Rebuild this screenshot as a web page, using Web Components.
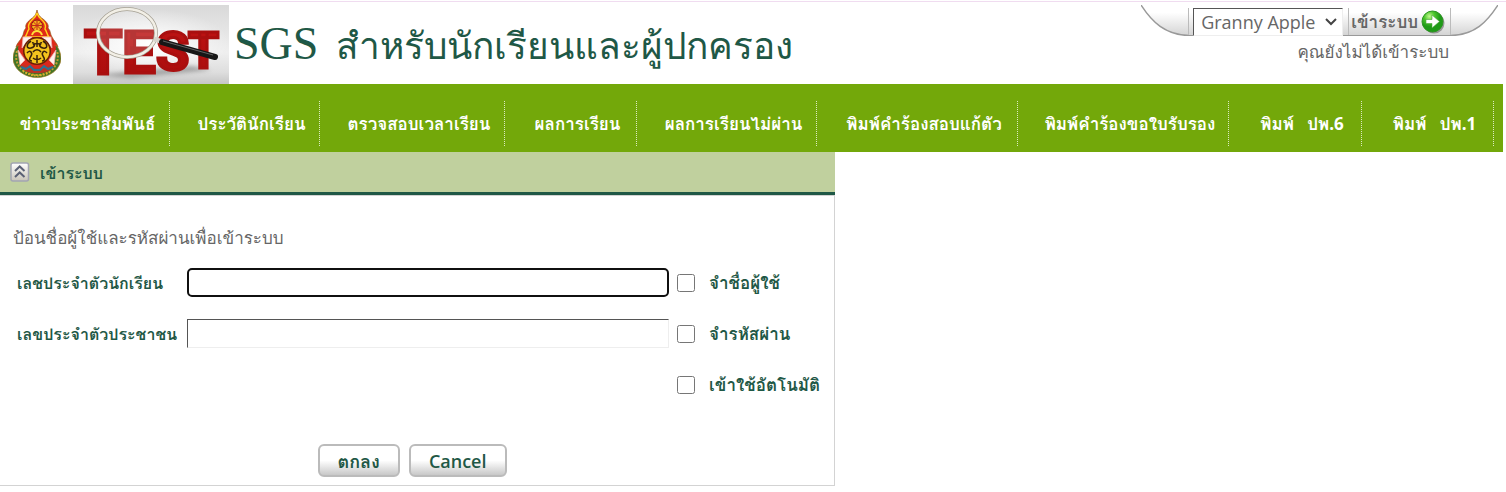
<!DOCTYPE html>
<html lang="th">
<head>
<meta charset="utf-8">
<meta name="viewport" content="width=device-width, initial-scale=1">
<title>SGS สำหรับนักเรียนและผู้ปกครอง</title>
<style>
	body{
		margin: 0;
		background: #fff;
		color: #666;
		font: 18px/24px "Open Sans", "Noto Sans", Loma, sans-serif;
	}
</style>
</head>
<body>

<sgs-page>
	<sgs-header slot="header">
		SGS
		<span slot="sub">สำหรับนักเรียนและผู้ปกครอง</span>
		<sgs-tools slot="tools" status="คุณยังไม่ได้เข้าระบบ"></sgs-tools>
	</sgs-header>
	<sgs-menu slot="menu"></sgs-menu>
	<sgs-panel heading="เข้าระบบ">
		<sgs-login></sgs-login>
	</sgs-panel>
</sgs-page>

<script>
class SgsPage extends HTMLElement {
	constructor(){
		super();
		this.attachShadow({mode:'open'});
	}
	connectedCallback(){
		this.shadowRoot.innerHTML = `
			<style>
				:host{
					display: block;
					padding-right: 3px;
				}
				header{
					position: relative;
				}
				header::before{
					content: "";
					position: absolute;
					top: 1px;
					left: 0;
					right: -3px;
					height: 1px;
					background: #f0dcf0;
				}
				main{
					display: grid;
					grid-template-columns: 5fr 4fr;
				}
			</style>
			<header><slot name="header"></slot></header>
			<slot name="menu"></slot>
			<main><slot></slot></main>
		`;
	}
}
customElements.define('sgs-page', SgsPage);


class SgsEmblem extends HTMLElement {
	constructor(){
		super();
		this.attachShadow({mode:'open'});
	}
	connectedCallback(){
		this.shadowRoot.innerHTML = `
			<style>
				:host{ display: block; }
				svg{ display: block; }
			</style>
			<svg width="48" height="68" viewBox="0 0 48 68" aria-hidden="true">
				<path d="M24 0c1 5 3 7 6 9 4 3 6 6 5 9 3 3 2 6 4 9 2 4 5 6 6 10H3c1-4 4-6 6-10 2-3 1-6 4-9-1-3 1-6 5-9 3-2 5-4 6-9z" fill="#e02a18" stroke="#8d5a18" stroke-width=".7"/>
				<path d="M24 3c1 4 4 6 6 8 3 3 3 5 2 8 2 3 2 6 4 8H12c2-2 2-5 4-8-1-3-1-5 2-8 2-2 5-4 6-8z" fill="none" stroke="#ffd21c" stroke-width="1.4"/>
				<path d="M4 36c-3 5-4 9-4 13 1 11 12 18.500 24 18.500S47 60 48 49c0-4-1-8-4-13z" fill="#3c7427" stroke="#a67b28" stroke-width=".7"/>
				<path d="M4 41c-4 14 7 24 20 24s24-10 20-24" fill="none" stroke="#c6a032" stroke-width="2" stroke-dasharray="2 1.500"/>
				<path d="M5 37c3-2 4-5 5-10h28c1 5 2 8 5 10-1 7 0 13-3 20-5 6-27 6-32 0-3-7-2-13-3-20z" fill="#d8281c"/>
				<path d="M10 27h9L9 38zM38 27h-9l10 11zM5 40l7 10-5 5zM43 40l-7 10 5 5z" fill="#fff2ee" stroke="#efb2ae" stroke-width=".8"/>
				<circle cx="24" cy="15.500" r="5.500" fill="#f5b21c" stroke="#8e1e10"/>
				<path d="M24 10v11M18.500 15.500h11M20 11.500l8 8M28 11.500l-8 8" stroke="#c5281a"/>
				<path d="M19 25c1-3 2-4 5-4s4 1 5 4" fill="none" stroke="#ffe03a" stroke-width="2"/>
				<circle cx="24" cy="41" r="14" fill="#6a2008"/>
				<circle cx="24" cy="41" r="12.500" fill="#f4c31e"/>
				<path d="M24 30v7M24 45v8M18 31c-5 3-5 8 0 7s4-6 1-5M30 31c5 3 5 8 0 7s-4-6-1-5M14 43c3-4 6 0 4 3s-2 5 1 5M34 43c-3-4-6 0-4 3s2 5-1 5M20 42c2-3 6-3 8 0M20 48c2 2 6 2 8 0M20 35c2-2 6-2 8 0" fill="none" stroke="#37210b" stroke-width="1.500"/>
				<path d="M7 56c4-2 7 0 9 2h16c2-2 5-4 9-2l-5 5c-7 3-17 3-24 0z" fill="#ba3326"/>
				<path d="M8 57l5 2 4-3 4 4 6 0 4-4 4 3 5-2" fill="none" stroke="#2c7191" stroke-width="2"/>
				<path d="M10 61c8 6 20 6 28 0" fill="none" stroke="#e0b22c" stroke-dasharray="1.500 1.500" stroke-width="2"/>
			</svg>
		`;
	}
}
customElements.define('sgs-emblem', SgsEmblem);


class SgsBanner extends HTMLElement {
	constructor(){
		super();
		this.attachShadow({mode:'open'});
	}
	connectedCallback(){
		this.shadowRoot.innerHTML = `
			<style>
				:host{ display: block; }
				svg{
					display: block;
					overflow: visible;
				}
				text{
					font-family: Roboto, sans-serif;
					font-weight: bold;
				}
			</style>
			<svg width="156" height="79" viewBox="0 0 156 79" role="img" aria-label="TEST">
				<defs>
					<linearGradient id="wall" x2="0" y2="1">
						<stop offset="0" stop-color="#d9d9d9"/>
						<stop offset=".6" stop-color="#efefef"/>
						<stop offset=".85" stop-color="#dedede"/>
						<stop offset="1" stop-color="#c6c6c6"/>
					</linearGradient>
					<radialGradient id="light">
						<stop offset="0" stop-color="#fff"/>
						<stop offset="1" stop-color="#fff" stop-opacity="0"/>
					</radialGradient>
					<linearGradient id="red" x2="0" y2="1">
						<stop offset="0" stop-color="#c01414"/>
						<stop offset="1" stop-color="#a80c0c"/>
					</linearGradient>
					<filter id="soft" x="-20%" y="-100%" width="140%" height="300%"><feGaussianBlur stdDeviation="2"/></filter>
				</defs>
				<rect width="156" height="79" fill="url(#wall)"/>
				<ellipse cx="76" cy="38" rx="80" ry="34" fill="url(#light)"/>
				<path d="M24 70l34 3 80-8-20-4z" fill="#777" opacity=".6" filter="url(#soft)"/>
				<g fill="url(#red)" stroke="#a90f0f" stroke-width="3">
					<text y="69" font-size="62" x="11">T</text>
					<text y="68" font-size="60" x="49">E</text>
					<text y="65" font-size="54" x="83">S</text>
					<text y="63" font-size="50" x="115">T</text>
				</g>
				<ellipse cx="54" cy="28" rx="29" ry="24" fill="#fff" opacity=".16"/>
				<ellipse cx="54" cy="28" rx="29" ry="24" fill="none" stroke="#a49f92" stroke-width="4"/>
				<ellipse cx="54" cy="28" rx="29" ry="24" fill="none" stroke="#f2efe6" stroke-width="2.500"/>
				<path d="M81 34l9 3" stroke="#d7d4cc" stroke-width="5"/>
				<path d="M89 37l53 15" stroke="#171717" stroke-width="6" stroke-linecap="round"/>
				<path d="M90 36l50 14" stroke="#626262"/>
			</svg>
		`;
	}
}
customElements.define('sgs-banner', SgsBanner);


class SgsHeader extends HTMLElement {
	constructor(){
		super();
		this.attachShadow({mode:'open'});
	}
	connectedCallback(){
		this.shadowRoot.innerHTML = `
			<style>
				:host{
					display: flex;
					align-items: flex-start;
					height: 84px;
				}
				sgs-emblem{ margin: 10px 12px 0 13px; }
				sgs-banner{ margin-top: 5px; }
				h1{
					display: flex;
					align-items: baseline;
					gap: 18px;
					margin: 0 0 0 5px;
					padding-top: 4px;
					color: #1f5846;
					font: 46px/80px "Liberation Serif", serif;
					white-space: nowrap;
				}
				::slotted([slot="sub"]){
					font-size: 37px;
				}
				.tools{ margin-left: auto; }
			</style>
			<sgs-emblem></sgs-emblem>
			<sgs-banner></sgs-banner>
			<h1><span><slot></slot></span><slot name="sub"></slot></h1>
			<div class="tools"><slot name="tools"></slot></div>
		`;
	}
}
customElements.define('sgs-header', SgsHeader);


class SgsTools extends HTMLElement {
	constructor(){
		super();
		this.attachShadow({mode:'open'});
	}
	static get observedAttributes(){
		return ['status'];
	}
	attributeChangedCallback(attr, oldVal, newVal){
		if(attr === "status"){
			this.status = newVal;
		}
	}
	connectedCallback(){
		this.shadowRoot.innerHTML = `
			<style>
				:host{
					display: block;
					padding: 5px 5px 0 0;
				}
				.bar{
					display: flex;
					height: 31px;
				}
				.bar > svg{ flex: none; }
				.body{
					display: flex;
					align-items: center;
					gap: 5px;
					padding: 3px 0 0 4px;
					box-sizing: border-box;
					background: linear-gradient(#fff 25%, #d4d4d4);
					border-bottom: 1px solid #999;
				}
				.pick{
					display: grid;
					align-items: center;
				}
				.pick > *{ grid-area: 1 / 1; }
				select{
					appearance: none;
					width: 150px;
					height: 28px;
					padding: 0 0 0 7px;
					border: 1px solid;
					border-color: #555 #eee #eee #555;
					border-radius: 0;
					background: #fff;
					color: #666;
					font: inherit;
				}
				.pick svg{
					justify-self: end;
					margin-right: 6px;
					pointer-events: none;
				}
				a{
					display: flex;
					align-items: center;
					gap: 3px;
					height: 27px;
					padding: 0 5px 0 2px;
					border-left: 1px solid #bbb;
					border-right: 1px solid #bbb;
					color: #666;
					font-size: 17px;
					font-weight: bold;
					text-decoration: none;
				}
				p{
					margin: 4px 49px 0 0;
					font-size: 17px;
					text-align: right;
				}
			</style>
			<div class="bar">
				<svg width="48" height="31" viewBox="0 0 48 31" aria-hidden="true">
					<defs><linearGradient id="l" x2="0" y2="1"><stop offset=".25" stop-color="#fff"/><stop offset="1" stop-color="#d4d4d4"/></linearGradient></defs>
					<path d="M0 0C11 17 24 30 48 30.500V0z" fill="url(#l)"/>
					<path d="M0 0C11 17 24 30 48 30.500" fill="none" stroke="#999" stroke-width="1.500"/>
					<path d="M47.500 3v27" stroke="#bbb"/>
				</svg>
				<div class="body">
					<div class="pick">
						<select aria-label="Theme"><option>Granny Apple</option></select>
						<svg width="12" height="8" viewBox="0 0 12 8" aria-hidden="true"><path d="M1 1l5 5 5-5" fill="none" stroke="#444" stroke-width="2"/></svg>
					</div>
					<a href="#login">เข้าระบบ
						<svg width="24" height="24" viewBox="0 0 24 24" aria-hidden="true">
							<defs><radialGradient id="g" cx=".35" cy=".25"><stop offset="0" stop-color="#c4f890"/><stop offset=".5" stop-color="#4cc62c"/><stop offset="1" stop-color="#1f9a18"/></radialGradient></defs>
							<circle cx="13" cy="13" r="10.500" fill="#666" opacity=".6"/>
							<circle cx="11.500" cy="11.500" r="10.500" fill="url(#g)" stroke="#2b9520"/>
							<path d="M5 9.500h6V5l7.500 6.500L11 18v-4.500H5z" fill="#fff" stroke="#4aa83a" stroke-width=".6"/>
						</svg>
					</a>
				</div>
				<svg width="47" height="31" viewBox="0 0 47 31" aria-hidden="true">
					<defs><linearGradient id="r" x2="0" y2="1"><stop offset=".25" stop-color="#fff"/><stop offset="1" stop-color="#d4d4d4"/></linearGradient></defs>
					<path d="M47 0C36 17 24 30 0 30.500V0z" fill="url(#r)"/>
					<path d="M47 0C36 17 24 30 0 30.500" fill="none" stroke="#999" stroke-width="1.500"/>
				</svg>
			</div>
			<p>${this.status}</p>
		`;
	}
}
customElements.define('sgs-tools', SgsTools);


class SgsMenu extends HTMLElement {
	constructor(){
		super();
		this.attachShadow({mode:'open'});
		this.items = [
			'ข่าวประชาสัมพันธ์',
			'ประวัตินักเรียน',
			'ตรวจสอบเวลาเรียน',
			'ผลการเรียน',
			'ผลการเรียนไม่ผ่าน',
			'พิมพ์คำร้องสอบแก้ตัว',
			'พิมพ์คำร้องขอใบรับรอง',
			'พิมพ์&nbsp;&nbsp; ปพ.6',
			'พิมพ์&nbsp;&nbsp; ปพ.1'
		];
	}
	connectedCallback(){
		this.shadowRoot.innerHTML = `
			<style>
				:host{
					display: block;
					padding: 17px 9px 6px 0;
					background: #73a80a;
				}
				nav{
					display: grid;
					grid-template-columns: 170fr 150fr 185fr 132fr 180fr 201fr 211fr 133fr 132fr;
				}
				a{
					padding: 0 12px 0 26px;
					border-right: 1px dotted #dcebc0;
					color: #fff;
					font-size: 17px;
					font-weight: bold;
					line-height: 45px;
					text-align: center;
					text-decoration: none;
					white-space: nowrap;
				}
				a:first-child{ padding-left: 18px; }
			</style>
			<nav>${this.items.map(item => `<a href="#">${item}</a>`).join('')}</nav>
		`;
	}
}
customElements.define('sgs-menu', SgsMenu);


class SgsPanel extends HTMLElement {
	constructor(){
		super();
		this.attachShadow({mode:'open'});
	}
	static get observedAttributes(){
		return ['heading'];
	}
	attributeChangedCallback(attr, oldVal, newVal){
		if(attr === "heading"){
			this.heading = newVal;
		}
	}
	connectedCallback(){
		this.shadowRoot.innerHTML = `
			<style>
				:host{ display: block; }
				.head{
					display: flex;
					align-items: center;
					gap: 10px;
					height: 40px;
					padding-left: 10px;
					background: #c0d09e;
					border-bottom: 3px solid #1f5846;
				}
				button{
					display: block;
					padding: 0;
					border: 0;
					background: none;
				}
				button svg{ display: block; }
				h2{
					margin: 0;
					padding-top: 2px;
					color: #1f5846;
					font-size: 16px;
				}
				.body{
					border: 1px solid #d3d3d3;
					border-left: 0;
				}
			</style>
			<section>
				<div class="head">
					<button type="button" aria-label="Collapse">
						<svg width="20" height="20" viewBox="0 0 20 20" aria-hidden="true">
							<defs><linearGradient id="b" x2="0" y2="1"><stop offset="0" stop-color="#fff"/><stop offset="1" stop-color="#c9c4b8"/></linearGradient></defs>
							<rect x="1" y="1" width="17.500" height="18" rx="2" fill="url(#b)" stroke="#a3a5b2" stroke-width="1.500"/>
							<path d="M5 9l4.700-4.500L14.500 9M5 15l4.700-4.500L14.500 15" fill="none" stroke="#5b6175" stroke-width="2"/>
						</svg>
					</button>
					<h2>${this.heading}</h2>
				</div>
				<div class="body"><slot></slot></div>
			</section>
		`;
	}
}
customElements.define('sgs-panel', SgsPanel);


class SgsLogin extends HTMLElement {
	constructor(){
		super();
		this.attachShadow({mode:'open'});
	}
	connectedCallback(){
		this.shadowRoot.innerHTML = `
			<style>
				:host{
					display: block;
					padding: 30px 18px 8px 13px;
				}
				p{
					margin: 0 0 18px;
					font-size: 17px;
				}
				.fields{
					display: grid;
					grid-template-columns: 162px 1fr 18px 113px;
					grid-auto-rows: 29px;
					align-items: center;
					gap: 22px 8px;
					padding-left: 4px;
				}
				label{
					color: #1f5846;
					font-size: 16px;
					font-weight: bold;
					white-space: nowrap;
				}
				input[type="checkbox"] + label{
					padding-left: 6px;
					font-size: 17px;
				}
				input{
					box-sizing: border-box;
					margin: 0;
				}
				.text{
					width: 100%;
					height: 29px;
					border: 1px solid;
					border-color: #555 #eee #eee #555;
					background: #fff;
					font: inherit;
				}
				.text.active{
					border: 2px solid #101010;
					border-radius: 5px;
					outline: 0;
				}
				input[type="checkbox"]{
					width: 18px;
					height: 18px;
				}
				.auto{ grid-column: 3; }
				.buttons{
					display: flex;
					justify-content: center;
					gap: 9px;
					margin-top: 45px;
					padding-right: 5px;
				}
				button{
					height: 33px;
					padding: 0 18px;
					border: 2px solid #bbb;
					border-radius: 6px;
					background: linear-gradient(#fff 50%, #c8c8c8);
					color: #1f5846;
					font: 600 18px/24px "Open Sans", Loma, sans-serif;
				}
			</style>
			<form id="login">
				<p>ป้อนชื่อผู้ใช้และรหัสผ่านเพื่อเข้าระบบ</p>
				<div class="fields">
					<label for="student">เลชประจำตัวนักเรียน</label>
					<input class="text active" id="student" type="text">
					<input id="keep-user" type="checkbox">
					<label for="keep-user">จำชื่อผู้ใช้</label>

					<label for="citizen">เลขประจำตัวประชาชน</label>
					<input class="text" id="citizen" type="password">
					<input id="keep-pass" type="checkbox">
					<label for="keep-pass">จำรหัสผ่าน</label>

					<input class="auto" id="auto" type="checkbox">
					<label for="auto">เข้าใช้อัตโนมัติ</label>
				</div>
				<div class="buttons">
					<button type="submit">ตกลง</button>
					<button type="button">Cancel</button>
				</div>
			</form>
		`;
	}
}
customElements.define('sgs-login', SgsLogin);
</script>
</body>
</html>
